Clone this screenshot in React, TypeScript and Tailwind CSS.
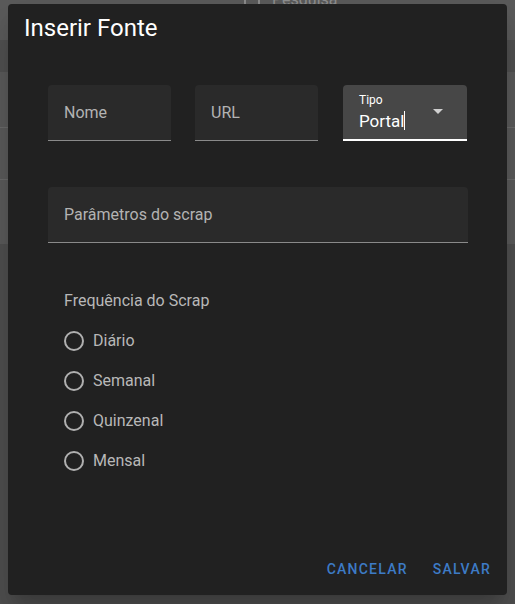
import React from "react";

function Field({ label, className = "" }: { label: string; className?: string }) {
  return (
    <div className={`h-[56px] rounded-t-[4px] bg-[#2a2a2a] border-b border-[#8a8a8a] flex items-center px-4 ${className}`}>
      <span className="text-[16px] text-[#b3b3b3] leading-none">{label}</span>
    </div>
  );
}

function Radio({ label }: { label: string }) {
  return (
    <div className="h-[40px] flex items-center">
      <div className="w-[38px] flex items-center justify-center pl-[2px]">
        <div className="w-[20px] h-[20px] rounded-full border-2 border-[#b0b0b0]" />
      </div>
      <span className="text-[16px] text-[#b8b8b8] pl-[1px]">{label}</span>
    </div>
  );
}

export default function App() {
  return (
    <div
      className="relative w-[515px] h-[604px] overflow-hidden bg-[#555555]"
      style={{ fontFamily: "Roboto, 'Noto Sans', Arial, sans-serif" }}
    >
      {/* backdrop content */}
      <div className="flex flex-col">
        <div className="h-[40px] bg-[#5a5a5a] flex items-start pl-[244px]">
          <div className="flex items-center gap-[12px] -mt-[10px] text-[#8e8e8e]">
            <div className="w-[16px] h-[16px] border-2 border-[#8a8a8a]" />
            <span className="text-[16px] leading-[20px]">Pesquisa</span>
          </div>
        </div>
        <div className="h-[32px] bg-[#505050]" />
        <div className="h-[56px] bg-[#5a5a5a] border-b border-[#6a6a6a]" />
        <div className="h-[52px] bg-[#5a5a5a] border-b border-[#6a6a6a]" />
        <div className="h-[64px] bg-[#5a5a5a]" />
        <div className="h-[360px] bg-[#4f4f4f]" />
      </div>

      {/* dialog */}
      <div className="absolute left-[8px] top-[4px] w-[499px] h-[591px] rounded-[4px] bg-[#212121] shadow-[0_11px_15px_-7px_rgba(0,0,0,0.2),0_24px_38px_3px_rgba(0,0,0,0.14)] flex flex-col">
        <div className="pt-[8px] px-[16px] h-[40px]">
          <h2 className="text-[24px] leading-[32px] text-white font-normal">Inserir Fonte</h2>
        </div>

        <div className="px-[40px] pt-[41px] flex flex-col">
          <div className="flex gap-[24px]">
            <Field label="Nome" className="w-[123px]" />
            <Field label="URL" className="w-[123px]" />
            <div className="ml-[1px] w-[124px] h-[56px] rounded-t-[4px] bg-[#474747] border-b-2 border-white flex items-center pl-[16px] pr-[24px]">
              <div className="flex flex-col flex-1">
                <span className="text-[12px] leading-[14px] text-white">Tipo</span>
                <div className="flex items-center h-[22px] mt-[3px]">
                  <span className="text-[17px] leading-[20px] text-white">Portal</span>
                  <span className="w-[1px] h-[19px] bg-white" />
                </div>
              </div>
              <svg width="10" height="5" viewBox="0 0 10 5" className="-mt-[2px]">
                <path d="M0 0 L10 0 L5 5 Z" fill="#d0d0d0" />
              </svg>
            </div>
          </div>

          <div className="mt-[46px]">
            <Field label="Parâmetros do scrap" className="w-[420px]" />
          </div>

          <div className="mt-[46px] pl-[16px] h-[24px] flex items-center">
            <span className="text-[16px] text-[#b8b8b8]">Frequência do Scrap</span>
          </div>

          <div className="mt-[8px] pl-[6px] flex flex-col">
            <Radio label="Diário" />
            <Radio label="Semanal" />
            <Radio label="Quinzenal" />
            <Radio label="Mensal" />
          </div>
        </div>

        <div className="mt-auto pb-[8px] pr-[8px] flex justify-end gap-[9px]">
          <button className="h-[36px] px-[8px] text-[14px] font-medium tracking-[1.25px] text-[#3d7bc6]">CANCELAR</button>
          <button className="h-[36px] px-[8px] text-[14px] font-medium tracking-[1.25px] text-[#3d7bc6]">SALVAR</button>
        </div>
      </div>
    </div>
  );
}
